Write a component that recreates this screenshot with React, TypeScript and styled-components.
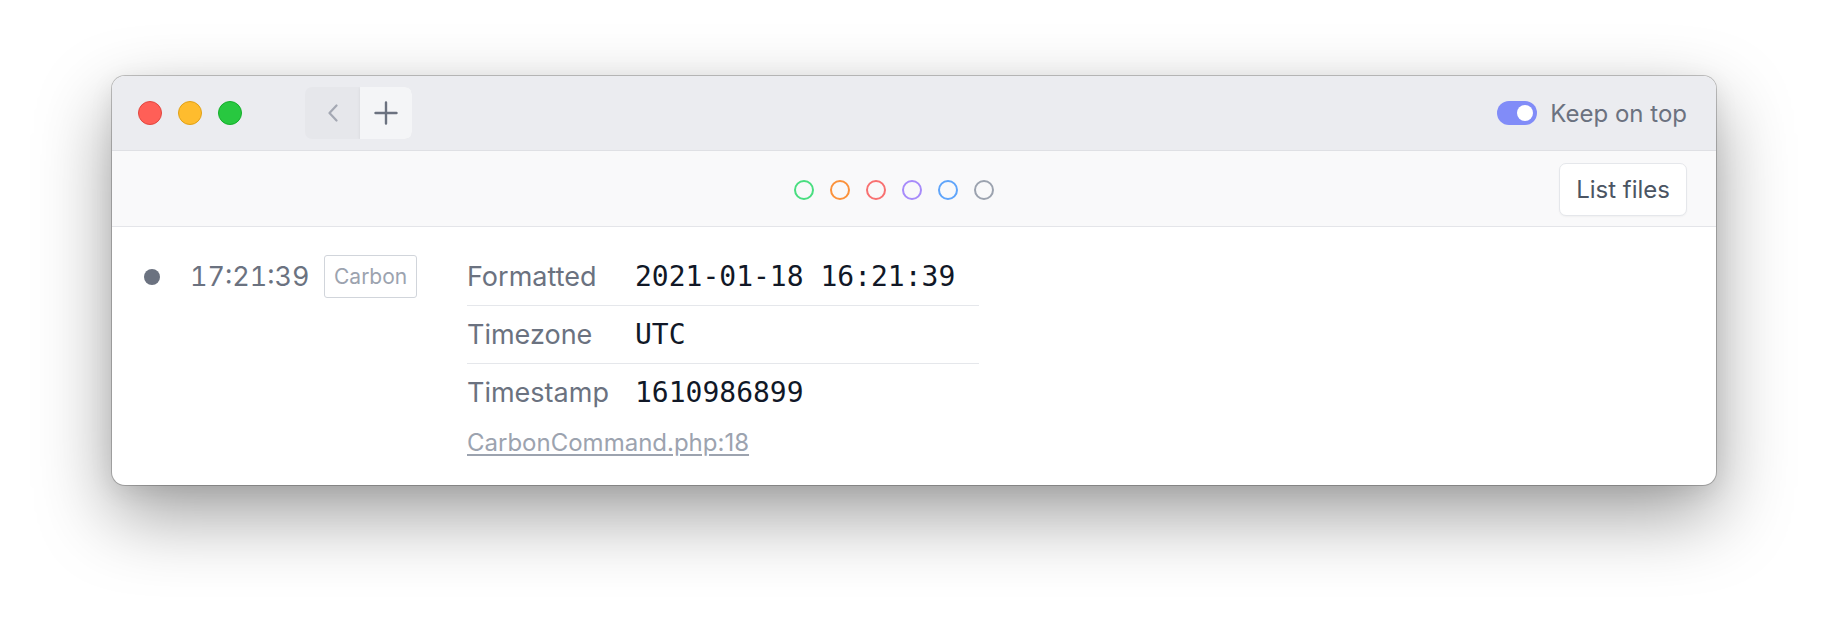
import React from 'react'
import styled, { createGlobalStyle } from 'styled-components'

const GlobalStyle = createGlobalStyle`
  html, body {
    margin: 0;
    padding: 0;
    background: #fff;
  }
  body {
    font-family: Inter, "Noto Sans", sans-serif;
    -webkit-font-smoothing: antialiased;
  }
`

const Page = styled.div`
  width: 1828px;
  height: 634px;
  box-sizing: border-box;
  padding: 76px 112px 0;
  overflow: hidden;
`

const Window = styled.div`
  height: 409px;
  border-radius: 13px;
  overflow: hidden;
  background: #fff;
  display: flex;
  flex-direction: column;
  box-shadow: 0 0 0 1px rgba(0, 0, 0, 0.22), 0 30px 75px rgba(0, 0, 0, 0.38),
    0 6px 24px rgba(0, 0, 0, 0.08);
`

const TitleBar = styled.div`
  flex: none;
  height: 74px;
  display: flex;
  align-items: center;
  padding: 0 29px 0 26px;
  background: #ebecf0;
  border-bottom: 1px solid #dfe0e4;
`

const Lights = styled.div`
  display: flex;
  gap: 16px;
`

const Light = styled.span<{ $color: string; $edge: string }>`
  width: 24px;
  height: 24px;
  border-radius: 50%;
  box-sizing: border-box;
  background: ${({ $color }) => $color};
  border: 1px solid ${({ $edge }) => $edge};
`

const NavGroup = styled.div`
  margin-left: 63px;
  display: flex;
  height: 52px;
  border-radius: 7px;
  background: #e6e7eb;
  overflow: hidden;
`

const NavButton = styled.button<{ $active?: boolean }>`
  width: ${({ $active }) => ($active ? '52px' : '55px')};
  height: 52px;
  border: 0;
  padding: 0;
  display: flex;
  align-items: center;
  justify-content: center;
  background: ${({ $active }) => ($active ? '#f4f5f7' : 'transparent')};
  box-shadow: ${({ $active }) => ($active ? '0 1px 3px rgba(0,0,0,0.08)' : 'none')};
`

const Spacer = styled.div`
  flex: 1;
`

const Toggle = styled.span`
  width: 40px;
  height: 24px;
  border-radius: 12px;
  background: #818cf8;
  display: flex;
  align-items: center;
  justify-content: flex-end;
  padding: 0 4px;
  box-sizing: border-box;
`

const Knob = styled.span`
  width: 16px;
  height: 16px;
  border-radius: 50%;
  background: #fff;
`

const ToggleLabel = styled.span`
  margin-left: 13px;
  font-size: 24px;
  color: #6b7280;
`

const Toolbar = styled.div`
  flex: none;
  height: 73px;
  padding: 2px 29px 0;
  display: grid;
  grid-template-columns: 1fr auto 1fr;
  align-items: center;
  background: #f9f9fa;
  border-bottom: 1px solid #e4e5e9;
`

const Filters = styled.div`
  grid-column: 2;
  display: flex;
  gap: 16px;
  margin-right: 41px;
`

const Filter = styled.span<{ $color: string }>`
  width: 20px;
  height: 20px;
  box-sizing: border-box;
  border-radius: 50%;
  border: 2px solid ${({ $color }) => $color};
`

const ListButton = styled.button`
  justify-self: end;
  height: 53px;
  padding: 0 16px;
  border: 1px solid #e5e7eb;
  border-radius: 7px;
  background: #fff;
  font-family: Inter, "Noto Sans", sans-serif;
  font-size: 24px;
  color: #4b5563;
  box-shadow: 0 1px 2px rgba(0, 0, 0, 0.04);
`

const Content = styled.div`
  flex: 1;
  padding: 21px 0 0 32px;
`

const Entry = styled.div`
  display: flex;
  align-items: flex-start;
`

const Marker = styled.div`
  width: 46px;
  height: 57px;
  display: flex;
  align-items: center;
`

const Dot = styled.span`
  width: 16px;
  height: 16px;
  border-radius: 50%;
  background: #6b7280;
`

const Time = styled.div`
  width: 134px;
  line-height: 57px;
  font-size: 27px;
  font-variant-numeric: tabular-nums;
  color: #6b7280;
`

const BadgeCell = styled.div`
  width: 143px;
  height: 57px;
  display: flex;
  align-items: center;
`

const Badge = styled.span`
  height: 43px;
  box-sizing: border-box;
  padding: 0 9px;
  display: inline-flex;
  align-items: center;
  border: 1px solid #d1d5db;
  border-radius: 3px;
  font-size: 21px;
  color: #9ca3af;
`

const Details = styled.div`
  width: 512px;
`

const Row = styled.div`
  display: grid;
  grid-template-columns: 168px 1fr;
  align-items: center;
  height: 57px;
  & + & {
    border-top: 1px solid #e5e7eb;
  }
`

const Label = styled.span`
  font-size: 27px;
  color: #6b7280;
`

const Value = styled.span`
  font-family: "DejaVu Sans Mono", "Liberation Mono", monospace;
  font-size: 28px;
  color: #111827;
`

const Source = styled.a`
  display: inline-block;
  margin-top: 8px;
  line-height: 28px;
  font-size: 24px;
  color: #9ca3af;
  text-decoration: underline;
  text-underline-offset: 3px;
`

const lights = [
  { color: '#ff5f57', edge: '#e2463f' },
  { color: '#febc2e', edge: '#e1a116' },
  { color: '#28c840', edge: '#14ae2a' },
]

const filters = ['#4ade80', '#fb923c', '#f87171', '#a78bfa', '#60a5fa', '#9ca3af']

const fields = [
  { label: 'Formatted', value: '2021-01-18 16:21:39' },
  { label: 'Timezone', value: 'UTC' },
  { label: 'Timestamp', value: '1610986899' },
]

export default function App() {
  return (
    <Page>
      <GlobalStyle />
      <Window>
        <TitleBar>
          <Lights>
            {lights.map(l => (
              <Light key={l.color} $color={l.color} $edge={l.edge} />
            ))}
          </Lights>
          <NavGroup>
            <NavButton>
              <svg width="12" height="18" viewBox="0 0 12 18" fill="none">
                <path d="M9.5 1.5 L2.5 9 L9.5 16.5" stroke="#a4a8b3" strokeWidth="2.2" strokeLinecap="round" strokeLinejoin="round" />
              </svg>
            </NavButton>
            <NavButton $active>
              <svg width="24" height="24" viewBox="0 0 24 24" fill="none">
                <path d="M12 1.5 V22.5 M1.5 12 H22.5" stroke="#6b7280" strokeWidth="2.4" strokeLinecap="round" />
              </svg>
            </NavButton>
          </NavGroup>
          <Spacer />
          <Toggle>
            <Knob />
          </Toggle>
          <ToggleLabel>Keep on top</ToggleLabel>
        </TitleBar>
        <Toolbar>
          <Filters>
            {filters.map(c => (
              <Filter key={c} $color={c} />
            ))}
          </Filters>
          <ListButton>List files</ListButton>
        </Toolbar>
        <Content>
          <Entry>
            <Marker>
              <Dot />
            </Marker>
            <Time>17:21:39</Time>
            <BadgeCell>
              <Badge>Carbon</Badge>
            </BadgeCell>
            <Details>
              {fields.map(f => (
                <Row key={f.label}>
                  <Label>{f.label}</Label>
                  <Value>{f.value}</Value>
                </Row>
              ))}
              <Source href="#">CarbonCommand.php:18</Source>
            </Details>
          </Entry>
        </Content>
      </Window>
    </Page>
  )
}
